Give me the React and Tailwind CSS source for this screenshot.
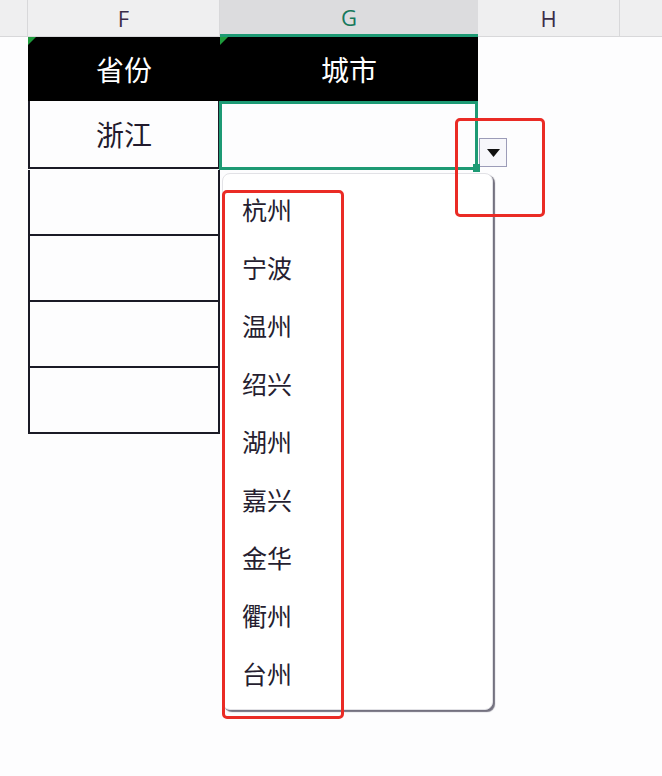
import React from "react";

const cities = ["杭州", "宁波", "温州", "绍兴", "湖州", "嘉兴", "金华", "衢州", "台州"];

const cjk = { fontFamily: '"Noto Sans CJK SC", "Noto Sans", sans-serif' };

function CornerMark() {
  return (
    <svg className="absolute left-0 top-0" width="8" height="8" viewBox="0 0 8 8">
      <polygon points="0,0 8,0 0,8" fill="#1e9b3c" />
    </svg>
  );
}

export default function App() {
  return (
    <div className="relative w-[662px] h-[776px] overflow-hidden bg-[#fdfdfe]" style={cjk}>
      {/* column letters */}
      <div
        className="flex h-[37px] bg-[#efeff0] text-[22px] text-[#3a2c48]"
        style={{ fontFamily: '"Open Sans", "Liberation Sans", sans-serif' }}
      >
        <div className="w-[28px] border-r border-b border-[#d8d8da]" />
        <div className="w-[192px] flex items-center justify-center border-r border-b border-[#d8d8da]">F</div>
        <div className="w-[258px] flex items-center justify-center bg-[#dcdcde] border-b-[3px] border-[#1d9a74] text-[#17795c]">G</div>
        <div className="w-[142px] flex items-center justify-center border-r border-b border-[#d8d8da]">H</div>
        <div className="flex-1 border-b border-[#d8d8da]" />
      </div>

      {/* sheet body */}
      <div className="pl-[28px]">
        <div className="grid grid-cols-[192px_258px]">
          <div className="relative h-[64px] bg-black flex items-center justify-center text-white text-[28px]">
            <CornerMark />
            省份
          </div>
          <div className="relative h-[64px] bg-black flex items-center justify-center text-white text-[28px]">
            <CornerMark />
            城市
          </div>

          <div className="h-[68px] border-2 border-t-0 border-[#1b1b26] flex items-center justify-center text-[28px] text-[#221a2c]">
            浙江
          </div>
          <div className="h-[69px] -ml-[1px] border-[3px] border-[#1d9a74]" />

          <div className="h-[66px] border-2 border-t-0 border-[#1b1b26]" />
          <div />
          <div className="h-[66px] border-2 border-t-0 border-[#1b1b26]" />
          <div />
          <div className="h-[66px] border-2 border-t-0 border-[#1b1b26]" />
          <div />
          <div className="h-[66px] border-2 border-t-0 border-[#1b1b26]" />
          <div />
        </div>
      </div>

      {/* dropdown toggle */}
      <div className="absolute left-[479px] top-[138px] w-[28px] h-[29px] bg-[#f7f7fb] border border-[#9c9cb8] flex items-center justify-center">
        <svg width="13" height="8" viewBox="0 0 13 8">
          <polygon points="0,0 13,0 6.5,8" fill="#111" />
        </svg>
      </div>

      {/* fill handle */}
      <div className="absolute left-[473px] top-[164px] w-[7px] h-[8px] bg-[#1d9a74]" />

      {/* validation list */}
      <div className="absolute left-[222px] top-[173px] w-[271px] h-[537px] bg-white rounded-[8px] border border-[#e2e2e6] shadow-[2px_2px_1px_rgba(90,88,104,0.85)] pt-[7px]">
        {cities.map((c) => (
          <div key={c} className="h-[58px] flex items-center pl-[19px] text-[25px] text-[#261e30]">
            {c}
          </div>
        ))}
      </div>

      {/* highlight frames */}
      <div className="absolute left-[455px] top-[118px] w-[90px] h-[99px] border-[3px] border-[#ea2b25] rounded-[5px]" />
      <div className="absolute left-[222px] top-[190px] w-[122px] h-[529px] border-[3px] border-[#ea2b25] rounded-[5px]" />
    </div>
  );
}
